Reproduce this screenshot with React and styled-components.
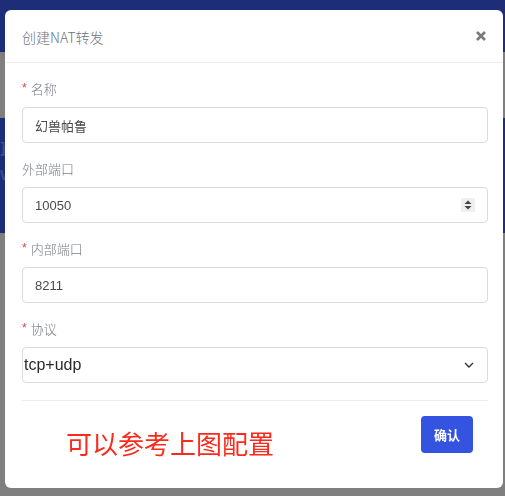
import styled, { createGlobalStyle } from "styled-components";

const GlobalStyle = createGlobalStyle`
    html, body {
        margin: 0;
        padding: 0;
        height: 100%;
        overflow: hidden;
    }
    body {
        font-family: "Liberation Sans", "Noto Sans CJK SC", sans-serif;
        background: #7f7f7f;
    }
`;

const Backdrop = styled.div`
    position: fixed;
    inset: 0;
    display: flex;
    flex-direction: column;
    background: #7f7f7f;
`;
const Band = styled.div`
    height: ${(props) => props.h}px;
    background: ${(props) => (props.dark ? "#1d2d78" : "#7f7f7f")};
    color: #3e4e8c;
    font-size: 15px;
    font-weight: bold;
    padding: 18px 0 0 0;
    box-sizing: border-box;
    line-height: 26px;
`;

const Modal = styled.div`
    position: absolute;
    left: 5px;
    top: 10px;
    width: 498px;
    height: 478px;
    background: #fff;
    border-radius: 6px;
    display: flex;
    flex-direction: column;
    box-sizing: border-box;
`;
const Header = styled.div`
    height: 53px;
    display: flex;
    align-items: center;
    justify-content: space-between;
    padding: 0 16px 0 17px;
    border-bottom: 1px solid #ececf0;
    box-sizing: border-box;
`;
const Title = styled.div`
    font-size: 14px;
    color: #6e717c;
    font-family: "Noto Sans CJK SC", sans-serif;
    font-weight: 300;
    margin-top: 1px;
`;
const Close = styled.button`
    border: none;
    background: none;
    padding: 0;
    width: 12px;
    height: 12px;
    display: flex;
    cursor: pointer;
`;
const Body = styled.div`
    padding: 16px 15px 0 17px;
    display: flex;
    flex-direction: column;
    gap: 16px;
`;
const Field = styled.div`
    display: flex;
    flex-direction: column;
    gap: 8px;
`;
const Label = styled.div`
    font-size: 13px;
    line-height: 20px;
    color: #797c85;
    font-family: "Noto Sans CJK SC", sans-serif;
    font-weight: 300;
    display: flex;
    align-items: center;
    gap: 4px;
`;
const Star = styled.span`
    color: #f23c3c;
    font-family: "Liberation Sans", sans-serif;
    font-size: 12px;
    margin-top: -2px;
`;
const Box = styled.div`
    height: 36px;
    border: 1px solid #d9dbe1;
    border-radius: 4px;
    box-sizing: border-box;
    display: flex;
    align-items: center;
    justify-content: space-between;
    padding: ${(props) => (props.select ? "0 13px 0 1px" : "0 12px")};
    font-size: ${(props) => (props.select ? "16px" : "13px")};
    color: ${(props) => (props.select ? "#2a2a2a" : "#4a4a4a")};
    font-family: "Liberation Sans", "Noto Sans CJK SC", sans-serif;
`;
const Spinner = styled.div`
    width: 14px;
    height: 14px;
    background: #efefef;
    display: flex;
    align-items: center;
    justify-content: center;
`;
const Divider = styled.div`
    height: 1px;
    background: #ececef;
    margin: 17px 15px 0 17px;
`;
const Footer = styled.div`
    display: flex;
    justify-content: space-between;
    align-items: flex-start;
    padding: 15px 30px 0 61px;
`;
const Note = styled.div`
    color: #fb2a1c;
    font-size: 26px;
    line-height: 30px;
    font-family: "Noto Sans CJK SC", sans-serif;
    margin-top: 12px;
`;
const Button = styled.button`
    width: 52px;
    height: 37px;
    border: none;
    border-radius: 4px;
    background: #3453e0;
    color: #fff;
    font-size: 13px;
    font-weight: bold;
    font-family: "Noto Sans CJK SC", sans-serif;
    padding: 0;
`;

const fields = [
    { label: "名称", required: true, value: "幻兽帕鲁" },
    { label: "外部端口", required: false, value: "10050", spin: true },
    { label: "内部端口", required: true, value: "8211" },
    { label: "协议", required: true, value: "tcp+udp", select: true },
];

function App() {
    return (
        <>
            <GlobalStyle />
            <Backdrop>
                <Band dark h={52} />
                <Band h={66} />
                <Band dark h={115}>
                    直<br />W
                </Band>
            </Backdrop>
            <Modal>
                <Header>
                    <Title>创建NAT转发</Title>
                    <Close>
                        <svg width="12" height="12" viewBox="0 0 12 12">
                            <path
                                d="M2 2L10 10M10 2L2 10"
                                stroke="#7a7a7a"
                                strokeWidth="2.6"
                            />
                        </svg>
                    </Close>
                </Header>
                <Body>
                    {fields.map((f) => (
                        <Field key={f.label}>
                            <Label>
                                {f.required && <Star>*</Star>}
                                {f.label}
                            </Label>
                            <Box select={f.select}>
                                <span>{f.value}</span>
                                {f.spin && (
                                    <Spinner>
                                        <svg width="8" height="10" viewBox="0 0 8 10">
                                            <path d="M4 0.5L7.5 4H0.5Z" fill="#444" />
                                            <path d="M4 9.5L7.5 6H0.5Z" fill="#444" />
                                        </svg>
                                    </Spinner>
                                )}
                                {f.select && (
                                    <svg width="10" height="6" viewBox="0 0 10 6">
                                        <path
                                            d="M1 1L5 5L9 1"
                                            stroke="#333"
                                            strokeWidth="1.4"
                                            fill="none"
                                        />
                                    </svg>
                                )}
                            </Box>
                        </Field>
                    ))}
                </Body>
                <Divider />
                <Footer>
                    <Note>可以参考上图配置</Note>
                    <Button>确认</Button>
                </Footer>
            </Modal>
        </>
    );
}

export default App;
